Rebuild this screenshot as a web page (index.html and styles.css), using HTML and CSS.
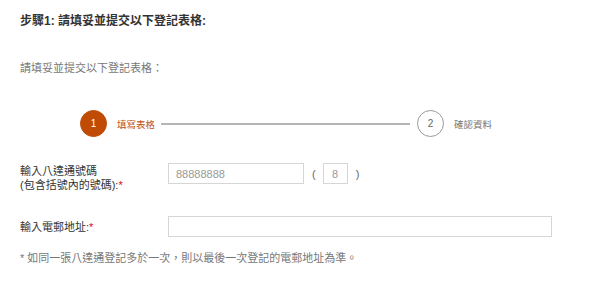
FILE: index.html
```html
<!DOCTYPE html>
<html lang="zh-Hant">
<head>
    <meta charset="UTF-8">
    <meta name="viewport" content="width=device-width, initial-scale=1.0">
    <title>登記表格</title>
    <link rel="stylesheet" href="styles.css">
</head>
<body>
    <div class="page">
        <h2 class="title">步驟1: 請填妥並提交以下登記表格:</h2>
        <p class="intro">請填妥並提交以下登記表格：</p>

        <div class="steps">
            <div class="step active">
                <span class="step-num">1</span>
                <span class="step-label">填寫表格</span>
            </div>
            <div class="step-line"></div>
            <div class="step">
                <span class="step-num">2</span>
                <span class="step-label">確認資料</span>
            </div>
        </div>

        <div class="form-row top">
            <label for="card-no">輸入八達通號碼<br>(包含括號內的號碼):<span class="req">*</span></label>
            <div class="field">
                <input type="text" id="card-no" class="input card" placeholder="88888888">
                <span class="paren">(</span>
                <input type="text" class="input check" placeholder="8">
                <span class="paren">)</span>
            </div>
        </div>

        <div class="form-row">
            <label for="email">輸入電郵地址:<span class="req">*</span></label>
            <div class="field">
                <input type="text" id="email" class="input email">
            </div>
        </div>

        <p class="note">* 如同一張八達通登記多於一次，則以最後一次登記的電郵地址為準。</p>
    </div>
</body>
</html>
```

FILE: styles.css
```css
body {
    margin: 0;
    background: #fff;
    font-family: "Liberation Sans", "Noto Sans CJK TC", sans-serif;
    color: #444;
}

.page {
    padding: 0 20px;
}

.title {
    font-size: 12px;
    font-weight: bold;
    color: #333;
    line-height: 18px;
    margin: 12px 0 0;
}

.intro {
    font-size: 11px;
    color: #777;
    line-height: 16px;
    margin: 30px 0 0;
}

.steps {
    display: flex;
    align-items: center;
    margin: 34px 0 0 60px;
    width: 412px;
}

.step {
    display: flex;
    align-items: center;
}

.step-num {
    width: 25px;
    height: 25px;
    border: 1px solid #999;
    border-radius: 50%;
    display: flex;
    align-items: center;
    justify-content: center;
    font-size: 10px;
    color: #666;
}

.step-label {
    margin-left: 10px;
    font-size: 9.5px;
    color: #777;
}

.step.active .step-num {
    background: #bf4b05;
    border-color: #bf4b05;
    color: #fff;
}

.step.active .step-label {
    color: #c0541a;
}

.step-line {
    flex: 1;
    height: 2px;
    background: #b5b5b5;
    margin: 0 7px 0 6px;
}

.form-row {
    display: grid;
    grid-template-columns: 148px auto;
    align-items: center;
    margin-top: 24px;
}

.form-row.top {
    align-items: start;
    margin-top: 26px;
}

.form-row label {
    font-size: 11px;
    line-height: 14px;
    color: #333;
}

.form-row.top label {
    padding-top: 1px;
}

.req {
    color: #e3001b;
}

.field {
    display: flex;
    align-items: center;
}

.input {
    box-sizing: border-box;
    height: 21px;
    border: 1px solid #d6d6d6;
    padding: 0 7px;
    font-family: inherit;
    font-size: 11px;
    color: #555;
    outline: none;
}

.input::placeholder {
    color: #999;
}

.card {
    width: 136px;
}

.check {
    width: 25px;
    padding: 0;
    text-align: center;
}

.paren {
    font-size: 11px;
    color: #666;
    margin: 0 7px 0 8px;
}

.email {
    width: 384px;
}

.note {
    font-size: 11px;
    color: #777;
    line-height: 14px;
    margin: 14px 0 0;
}
```
